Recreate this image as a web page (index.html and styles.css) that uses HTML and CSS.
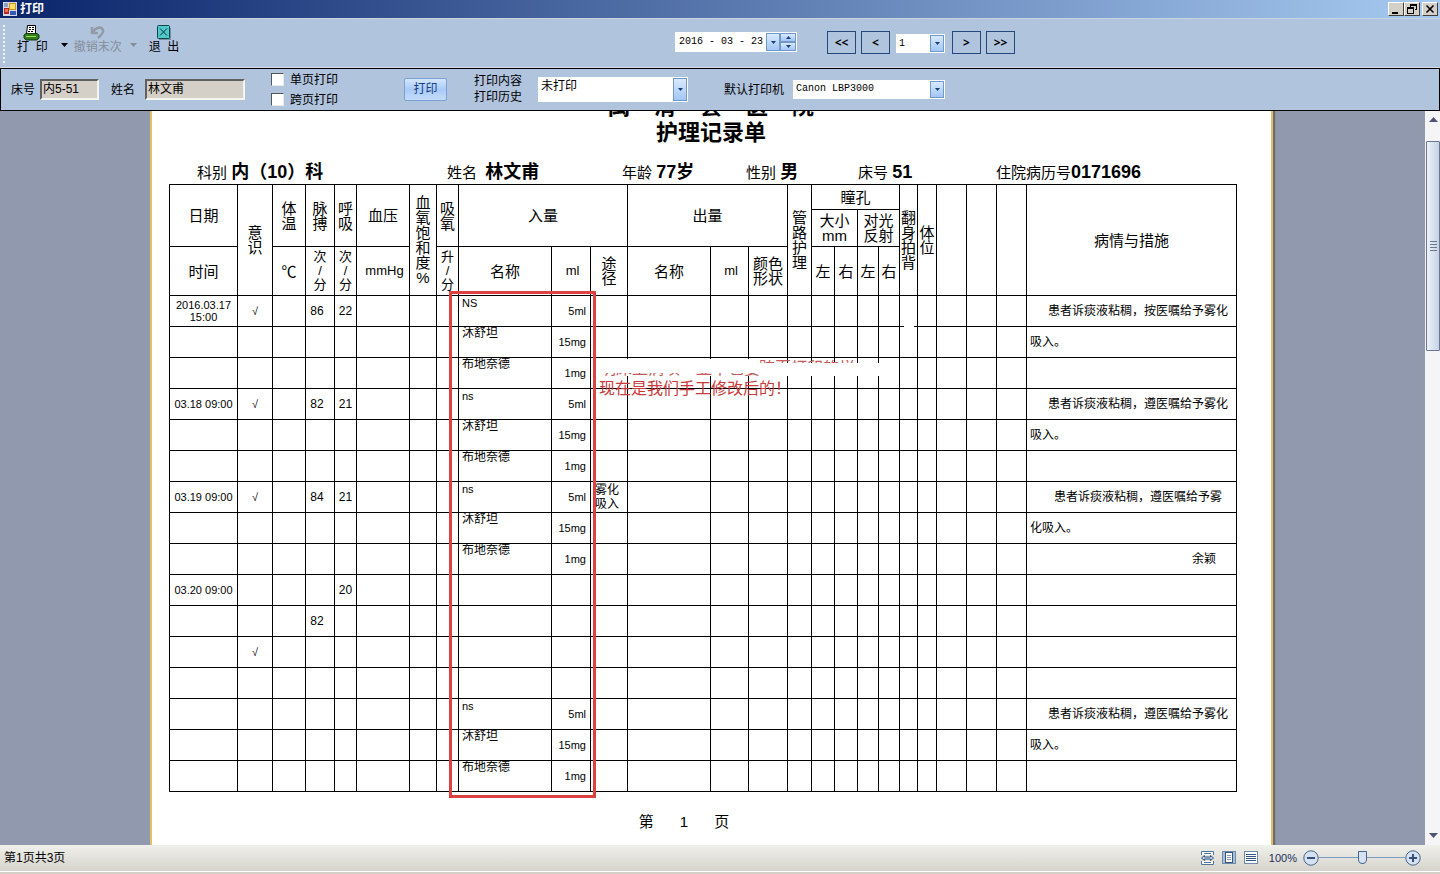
FILE: index.html
```html
<!DOCTYPE html>
<html lang="zh-CN">
<head>
<meta charset="utf-8">
<title>打印</title>
<link rel="stylesheet" href="styles.css">
</head>
<body>
<header class="titlebar">
  <svg class="app-icon" width="14" height="14" viewBox="0 0 14 14"><rect width="14" height="14" fill="#d8d8e4"/><rect x="1" y="1" width="4" height="4" fill="#8d9ed0"/><rect x="6" y="1" width="7" height="7" fill="#c89520"/><rect x="7" y="2" width="5" height="5" fill="#ffdf68"/><rect x="1" y="6" width="5" height="6" fill="#b5281c"/><rect x="2" y="7" width="3" height="3" fill="#ef7050"/><rect x="7" y="9" width="6" height="4" fill="#3558b8"/></svg>
  <h1 class="title">打印</h1>
  <div class="win-buttons">
    <button class="win" aria-label="最小化"><svg width="14" height="12"><path d="M3 9h6v2H3z"/></svg></button>
    <button class="win" aria-label="还原"><svg width="14" height="12"><path d="M5 1h7v6h-2V6h1V3H6v1H5zM2 4h7v7H2zM3 6v4h5V6z" fill-rule="evenodd"/></svg></button>
    <button class="win win-close" aria-label="关闭"><svg width="14" height="12"><path d="M3.500 2.500l7 7M10.500 2.500l-7 7" stroke="#000" stroke-width="1.600"/></svg></button>
  </div>
</header>

<div class="toolbar">
  <div class="tools">
    <span class="grip"></span>
    <button class="tool"><svg width="18" height="16" viewBox="0 0 18 16"><path d="M4.500 .5h8V9h-9z" fill="#fff" stroke="#000"/><path d="M6 2.500h2m1 0h2M6 4.500h2m1 0h2M5 6.500h2m1 0h2" stroke="#000"/><path d="M3 8.500h11l2 1.500v3l-2 2H3l-2-2v-3z" fill="#2f7d20" stroke="#123c0c"/><path d="M3 11.500h10" stroke="#a8d850"/></svg><span>打 &nbsp;印</span></button>
    <svg class="caret" width="7" height="4"><path d="M0 0h7L3.500 4z"/></svg>
    <button class="tool tool-undo" disabled><svg width="18" height="16" viewBox="0 0 18 16"><path d="M3 2v6h6M3.500 7.500C7 2 12 1 14 5c1 3-2 5-5 8" fill="none" stroke="#929aa6" stroke-width="2.500"/></svg><span>撤销末次</span></button>
    <svg class="caret caret-off" width="7" height="4"><path d="M0 0h7L3.500 4z"/></svg>
    <button class="tool"><svg width="18" height="16" viewBox="0 0 18 16"><path d="M4 3h12v12H4z" fill="#7d8ba0"/><rect x="2.500" y=".5" width="12" height="13" rx="1" fill="#52c8cb" stroke="#07484f"/><path d="M5 3.500l7 7M12 3.500l-7 7" stroke="#06343c"/></svg><span>退 &nbsp;出</span></button>
  </div>
  <div class="date">
    <input class="date-text" value="2016 - 03 - 23" aria-label="日期">
    <button class="drop" aria-label="选择日期"><svg width="5" height="3"><path d="M0 0h5L2.500 3z"/></svg></button>
    <span class="spin"><button aria-label="增加"><svg width="5" height="3"><path d="M0 3h5L2.500 0z"/></svg></button><button aria-label="减少"><svg width="5" height="3"><path d="M0 0h5L2.500 3z"/></svg></button></span>
  </div>
  <nav class="pager">
    <button class="page-btn">&lt;&lt;</button>
    <button class="page-btn">&lt;</button>
    <span class="combo combo-page"><select aria-label="页码"><option>1</option><option>2</option><option>3</option></select><span class="drop"><svg width="5" height="3"><path d="M0 0h5L2.500 3z"/></svg></span></span>
    <button class="page-btn">&gt;</button>
    <button class="page-btn">&gt;&gt;</button>
  </nav>
</div>

<form class="filters">
  <label class="field" for="bed">床号</label><input class="sunken bed" id="bed" value="内5-51" readonly>
  <label class="field name-label" for="name">姓名</label><input class="sunken name" id="name" value="林文甫" readonly>
  <div class="checks">
    <label><input type="checkbox">单页打印</label>
    <label><input type="checkbox">跨页打印</label>
  </div>
  <button class="print" type="button">打印</button>
  <label class="content-label" for="content">打印内容<br>打印历史</label>
  <span class="combo combo-content"><select id="content"><option>未打印</option></select><span class="drop"><svg width="5" height="3"><path d="M0 0h5L2.500 3z"/></svg></span></span>
  <label class="printer-label" for="printer">默认打印机</label>
  <span class="combo combo-printer"><select id="printer"><option>Canon LBP3000</option></select><span class="drop"><svg width="5" height="3"><path d="M0 0h5L2.500 3z"/></svg></span></span>
</form>

<main class="viewer">
  <div class="desk">
    <article class="paper">
      <h2 class="hospital"><span>闽</span><span>清</span><span>县</span><span>医</span><span>院</span></h2>
      <h2 class="doc-title">护理记录单</h2>
      <div class="patient">
        <span>科别 <b>内（10）科</b></span>
        <span>姓名 &nbsp;<b>林文甫</b></span>
        <span>年龄 <b>77岁</b></span>
        <span>性别 <b>男</b></span>
        <span>床号 <b>51</b></span>
        <span>住院病历号<b>0171696</b></span>
      </div>
      <div class="chart">
        <table>
          <colgroup><col class="c68"><col class="c35"><col class="c33"><col class="c29"><col class="c22"><col class="c53"><col class="c27"><col class="c22"><col class="c93"><col class="c39"><col class="c37"><col class="c83"><col class="c38"><col class="c39"><col class="c24"><col class="c23"><col class="c23"><col class="c21"><col class="c21"><col class="c18"><col class="c19"><col class="c30"><col class="c30"><col class="c30"><col></colgroup>
          <thead>
            <tr class="h1"><th rowspan="2">日期<th rowspan="3">意<br>识<th rowspan="2">体<br>温<th rowspan="2">脉<br>搏<th rowspan="2">呼<br>吸<th rowspan="2">血压<th rowspan="3">血<br>氧<br>饱<br>和<br>度<br>%<th rowspan="2">吸<br>氧<th colspan="3" rowspan="2">入量<th colspan="3" rowspan="2">出量<th rowspan="3">管<br>路<br>护<br>理<th colspan="4">瞳孔<th rowspan="3">翻<br>身<br>拍<br>背<th rowspan="3">体<br>位<th rowspan="3"><th rowspan="3"><th rowspan="3"><th rowspan="3">病情与措施</tr>
            <tr class="h2"><th colspan="2">大小<br>mm<th colspan="2">对光<br>反射</tr>
            <tr class="h3"><th>时间<th>℃<th class="per">次<br>/<br>分<th class="per">次<br>/<br>分<th class="unit">mmHg<th class="per">升<br>/<br>分<th>名称<th class="unit">ml<th>途<br>径<th>名称<th class="unit">ml<th>颜色<br>形状<th>左<th>右<th>左<th>右</tr>
          </thead>
          <tbody>
            <tr><td>2016.03.17<br>15:00<td>√<td><td class="pulse">86<td class="num">22<td><td><td><td class="drug latin">NS<td class="dose">5ml<td><td><td><td><td><td><td><td><td><td><td><td><td><td><td class="note">患者诉痰液粘稠，按医嘱给予雾化</tr>
            <tr><td><td><td><td><td><td><td><td><td class="drug">沐舒坦<td class="dose">15mg<td><td><td><td><td><td><td><td><td><td><td><td><td><td><td class="note-left">吸入。</tr>
            <tr><td><td><td><td><td><td><td><td><td class="drug">布地奈德<td class="dose">1mg<td><td><td><td><td><td><td><td><td><td><td><td><td><td><td></tr>
            <tr><td>03.18 09:00<td>√<td><td class="pulse">82<td class="num">21<td><td><td><td class="drug latin">ns<td class="dose">5ml<td><td><td><td><td><td><td><td><td><td><td><td><td><td><td class="note">患者诉痰液粘稠，遵医嘱给予雾化</tr>
            <tr><td><td><td><td><td><td><td><td><td class="drug">沐舒坦<td class="dose">15mg<td><td><td><td><td><td><td><td><td><td><td><td><td><td><td class="note-left">吸入。</tr>
            <tr><td><td><td><td><td><td><td><td><td class="drug">布地奈德<td class="dose">1mg<td><td><td><td><td><td><td><td><td><td><td><td><td><td><td></tr>
            <tr><td>03.19 09:00<td>√<td><td class="pulse">84<td class="num">21<td><td><td><td class="drug latin">ns<td class="dose">5ml<td class="route">雾化<br>吸入<td><td><td><td><td><td><td><td><td><td><td><td><td><td class="note">患者诉痰液粘稠，遵医嘱给予雾</tr>
            <tr><td><td><td><td><td><td><td><td><td class="drug">沐舒坦<td class="dose">15mg<td><td><td><td><td><td><td><td><td><td><td><td><td><td><td class="note-left">化吸入。</tr>
            <tr><td><td><td><td><td><td><td><td><td class="drug">布地奈德<td class="dose">1mg<td><td><td><td><td><td><td><td><td><td><td><td><td><td><td class="sign">余颖</tr>
            <tr><td>03.20 09:00<td><td><td><td class="num">20<td><td><td><td><td><td><td><td><td><td><td><td><td><td><td><td><td><td><td><td></tr>
            <tr><td><td><td><td class="pulse">82<td><td><td><td><td><td><td><td><td><td><td><td><td><td><td><td><td><td><td><td><td></tr>
            <tr><td><td>√<td><td><td><td><td><td><td><td><td><td><td><td><td><td><td><td><td><td><td><td><td><td><td></tr>
            <tr><td><td><td><td><td><td><td><td><td><td><td><td><td><td><td><td><td><td><td><td><td><td><td><td><td></tr>
            <tr><td><td><td><td><td><td><td><td><td class="drug latin">ns<td class="dose">5ml<td><td><td><td><td><td><td><td><td><td><td><td><td><td><td class="note">患者诉痰液粘稠，遵医嘱给予雾化</tr>
            <tr><td><td><td><td><td><td><td><td><td class="drug">沐舒坦<td class="dose">15mg<td><td><td><td><td><td><td><td><td><td><td><td><td><td><td class="note-left">吸入。</tr>
            <tr><td><td><td><td><td><td><td><td><td class="drug">布地奈德<td class="dose">1mg<td><td><td><td><td><td><td><td><td><td><td><td><td><td><td></tr>
          </tbody>
        </table>
        <div class="erased erased-left"></div>
        <div class="erased erased-right"></div>
        <div class="erased erased-gap"></div>
        <div class="remnant remnant-low" aria-hidden="true"><span>明床上病项一显中也要</span></div>
        <div class="remnant remnant-high" aria-hidden="true"><span>跨页打印的样</span></div>
        <p class="remark">现在是我们手工修改后的！</p>
        <div class="mark"></div>
      </div>
      <footer class="folio"><span>第</span><span>1</span><span>页</span></footer>
    </article>
  </div>
  <div class="scrollbar">
    <svg width="9" height="5"><path d="M0 5h9L4.500 0z" fill="#4d5478"/></svg>
    <div class="thumb"><i></i><i></i><i></i><i></i></div>
    <svg class="down" width="9" height="5"><path d="M0 0h9L4.500 5z" fill="#4d5478"/></svg>
  </div>
</main>

<footer class="status">
  <span>第1页共3页</span>
  <div class="zoom">
    <button aria-label="页宽"><svg width="15" height="14" viewBox="0 0 15 14"><path d="M1.500 4V.5h12V4M1.500 10v3.500h12V10" fill="#fff" stroke="#53749a"/><path d="M4 2.500h7M4 11.500h7" stroke="#53749a"/><path d="M1.500 7l3-2.500v1.500h6V4.500l3 2.500-3 2.500V8h-6v1.500z" fill="#c6d9ee" stroke="#34557d"/></svg></button>
    <button aria-label="整页"><svg width="15" height="14" viewBox="0 0 15 14"><rect x=".5" y=".5" width="13" height="12" fill="#a9bfd8" stroke="#6e8bad"/><rect x="3.500" y="1.500" width="7" height="10" fill="#fff" stroke="#34557d"/><path d="M5 4.500h4M5 6.500h4M5 8.500h4" stroke="#7c9cc4"/></svg></button>
    <button aria-label="连续"><svg width="15" height="14" viewBox="0 0 15 14"><rect x=".5" y=".5" width="13" height="12" fill="#fff" stroke="#6e8bad"/><path d="M2 3.500h10M2 5.500h10M2 7.500h10M2 9.500h10" stroke="#34557d"/></svg></button>
    <label for="scale">100%</label>
    <button aria-label="缩小"><svg width="16" height="16"><circle cx="8" cy="8" r="7.200" fill="#d5e2f2" stroke="#49658c"/><path d="M4 8h8" stroke="#34507c" stroke-width="2"/></svg></button>
    <input id="scale" type="range" min="0" max="200" value="100">
    <button aria-label="放大"><svg width="16" height="16"><circle cx="8" cy="8" r="7.200" fill="#d5e2f2" stroke="#49658c"/><path d="M4 8h8M8 4v8" stroke="#34507c" stroke-width="2"/></svg></button>
  </div>
</footer>
</body>
</html>
```
FILE: styles.css
```css
* { box-sizing: border-box; }
body {
  margin: 0;
  height: 100vh;
  display: flex;
  flex-direction: column;
  overflow: hidden;
  font: 12px/16px "Liberation Sans", "Noto Sans CJK SC", sans-serif;
  color: #000;
  background: #b0c4de;
}
button, input, select { font: inherit; color: inherit; margin: 0; padding: 0; border-radius: 0; }
button { border: 0; background: none; }
svg { display: block; }

.titlebar {
  flex: none;
  height: 18px;
  display: flex;
  align-items: center;
  padding: 0 2px 0 3px;
  background: linear-gradient(90deg, #0a246a, #a6caf0);
}
.title { margin: 0 0 0 3px; font-size: 12px; line-height: 16px; color: #fff; }
.win-buttons { margin-left: auto; display: flex; }
.win {
  width: 16px;
  height: 14px;
  background: #d4d0c8;
  border: 1px solid;
  border-color: #fff #404040 #404040 #fff;
}
.win-close { margin-left: 2px; }

.toolbar {
  flex: none;
  height: 50px;
  display: flex;
  align-items: flex-start;
  border-top: 1px solid #c6d6dc;
  border-bottom: 1px solid #d4dce6;
}
.tools { width: 675px; display: flex; align-items: flex-start; padding: 6px 0 0 3px; }
.grip { width: 2px; height: 38px; background: repeating-linear-gradient(#eef3fa 0 2px, transparent 2px 4px); }
.tool { margin-left: 12px; display: flex; flex-direction: column; align-items: center; line-height: 14px; font-size: 12px; white-space: nowrap; }
.tool svg { margin-bottom: -1px; }
.tool-undo { margin-left: 6px; color: #858d99; }
.caret { margin: 18px 0 0 13px; }
.caret-off { margin-left: 8px; fill: #858d99; }
.date {
  width: 122px;
  height: 20px;
  margin-top: 13px;
  padding: 1px;
  display: flex;
  background: #fff;
}
.date-text, .combo-page, .combo-printer { font-family: "Liberation Mono", monospace; font-size: 10px; }
.date-text { flex: 1; min-width: 0; padding-left: 3px; border: 0; background: none; }
.drop, .spin button {
  display: flex;
  align-items: center;
  justify-content: center;
  border: 1px solid #7398cc;
  background: linear-gradient(#d9e9fd, #a3c6f5);
  fill: #173f7d;
}
.drop { width: 14px; height: 18px; }
.spin { width: 16px; display: grid; }
.pager { display: flex; align-items: center; gap: 5px; margin: 12px 0 0 30px; }
.page-btn {
  width: 29px;
  height: 23px;
  border: 1px solid #24487c;
  font: bold 12px/18px "Noto Sans", sans-serif;
}
.combo { position: relative; display: flex; background: #fff; }
.combo select { width: 100%; border: 0; padding: 0 18px 0 3px; background: none; appearance: none; }
.combo .drop { position: absolute; right: 1px; top: 1px; bottom: 1px; height: auto; pointer-events: none; }
.combo-page { width: 49px; height: 19px; margin: 2px 2px 0 1px; }

.filters {
  flex: none;
  height: 43px;
  display: flex;
  align-items: center;
  padding-left: 10px;
  border: 1px solid #000;
}
.sunken {
  height: 21px;
  padding: 0 0 4px 1px;
  border: 2px solid;
  border-color: #606060 #f4f4f0 #f4f4f0 #606060;
  background: #d4d0c8;
}
.bed { width: 59px; margin-left: 5px; }
.name-label { margin-left: 12px; }
.name { width: 100px; margin-left: 10px; }
.checks { width: 107px; margin-left: 26px; display: grid; gap: 4px; }
.checks label { display: flex; align-items: center; gap: 6px; }
.checks input {
  appearance: none;
  width: 13px;
  height: 13px;
  border: 1px solid;
  border-color: #555 #e8e8e8 #e8e8e8 #555;
  background: #fff;
}
.print {
  width: 43px;
  height: 23px;
  margin-left: 26px;
  padding-bottom: 2px;
  border: 1px solid #7ba1d4;
  border-radius: 2px;
  background: linear-gradient(#d5e6fc, #a9cbf8 50%, #c4dcfb);
  color: #173f7d;
}
.content-label { margin-left: 27px; padding-bottom: 2px; }
.combo-content { width: 150px; height: 25px; margin-left: 16px; }
.combo-content select { padding-bottom: 8px; }
.printer-label { margin-left: 36px; }
.combo-printer { width: 152px; height: 19px; margin-left: 9px; }
.combo-printer select { padding-bottom: 2px; }

.viewer { flex: 1; min-height: 0; display: flex; background: #9099ae; }
.desk { flex: 1; min-width: 0; padding-right: 2px; overflow: hidden; }
.paper {
  display: flow-root;
  max-width: 1123px;
  min-height: 100%;
  margin: 0 auto;
  padding: 0 34px 0 17px;
  background: #fff;
  border: solid #e5be6c;
  border-width: 0 2px;
  box-shadow: 2px 0 1px #6d6d68;
}
.hospital, .doc-title { margin: 0; text-align: center; font-size: 22px; line-height: 24px; }
.hospital { display: flex; justify-content: center; gap: 24px; margin-top: -16px; padding-left: 16px; }
.doc-title { margin-top: 2px; padding-left: 16px; }
.patient {
  display: grid;
  grid-template-columns: 250px 175px 124px 112px 138px auto;
  align-items: baseline;
  margin: 17px 0 1px;
  padding-left: 28px;
  font-size: 15px;
  line-height: 20px;
  white-space: nowrap;
}
.patient b { font-size: 18px; }
.chart { position: relative; }
table { width: 100%; table-layout: fixed; border-collapse: collapse; }
th, td { border: 1px solid #000; padding: 0; text-align: center; }
th { font-size: 15px; line-height: 15px; font-weight: 400; }
td { height: 31px; font-size: 11px; line-height: 12px; white-space: nowrap; }
.h1 { height: 25px; }
.h2 { height: 37px; }
.h3 { height: 49px; }
.unit, .per { font-size: 13px; line-height: 14px; }
.unit { padding-left: 3px; }
.c18 { width: 18px; } .c19 { width: 19px; } .c21 { width: 21px; } .c22 { width: 22px; }
.c23 { width: 23px; } .c24 { width: 24px; } .c27 { width: 27px; } .c29 { width: 29px; }
.c30 { width: 30px; } .c33 { width: 33px; } .c35 { width: 35px; } .c37 { width: 37px; }
.c38 { width: 38px; } .c39 { width: 39px; } .c53 { width: 53px; } .c68 { width: 68px; }
.c83 { width: 83px; } .c93 { width: 93px; }
.num, .pulse, .note, .note-left, .sign, .route { font-size: 12px; }
.pulse { padding-right: 6px; }
.drug { padding: 0 0 0 3px; text-align: left; vertical-align: top; font-size: 12px; }
.latin { padding-top: 1px; font-size: 11px; }
.dose { padding-right: 4px; text-align: right; }
.route { padding-left: 4px; text-align: left; line-height: 14px; }
.note { padding-left: 13px; }
.note-left { padding-left: 3px; text-align: left; }
.sign { padding-right: 20px; text-align: right; }

.erased, .remnant, .remark, .mark { position: absolute; }
.erased { background: #fff; }
.erased-left { left: 427px; top: 175px; width: 165px; height: 17px; }
.erased-right { left: 590px; top: 179px; width: 120px; height: 13px; }
.erased-gap { left: 735px; top: 139px; width: 10px; height: 8px; }
.remnant { height: 3px; overflow: hidden; font-size: 16px; color: #c25a5a; white-space: nowrap; }
.remnant span { display: block; line-height: 16px; }
.remnant-low { left: 431px; top: 189px; }
.remnant-low span { margin-top: -12px; }
.remnant-high { left: 590px; top: 176px; }
.remark { left: 430px; top: 196px; margin: 0; font-size: 16px; line-height: 18px; color: #c93c3c; }
.mark { left: 280px; top: 107px; width: 147px; height: 507px; border: 3px solid #dc4340; }
.folio { display: flex; justify-content: center; gap: 26px; margin-top: 20px; padding-right: 38px; font-size: 15px; line-height: 20px; }

.scrollbar { width: 15px; padding: 6px 0 7px 1px; display: flex; flex-direction: column; align-items: center; background: #f5f5f8; }
.thumb {
  width: 100%;
  height: 210px;
  margin-top: 19px;
  display: flex;
  flex-direction: column;
  align-items: center;
  justify-content: center;
  gap: 2px;
  border: 1px solid #6b7594;
  border-radius: 1px;
  background: linear-gradient(90deg, #eef2f8, #c5d2e4);
}
.thumb i { width: 7px; height: 1px; background: #6b7594; }
.down { margin-top: auto; }

.status {
  flex: none;
  height: 29px;
  display: flex;
  align-items: center;
  justify-content: space-between;
  padding: 0 19px 4px 4px;
  background: linear-gradient(#f0f0ec, #d5d3cb 26px, #fff 26px, #fff 27px, #d4d0c8 27px);
}
.zoom { display: flex; align-items: center; color: #1c2f5c; }
.zoom button { margin-right: 7px; }
.zoom label { margin: 0 6px 0 3px; font-size: 11px; }
.zoom label ~ button { margin-right: 0; }
.zoom input { width: 86px; height: 14px; appearance: none; background: linear-gradient(#7e9bc0, #7e9bc0) center / 100% 1px no-repeat; }
.zoom input::-webkit-slider-thumb {
  appearance: none;
  width: 9px;
  height: 13px;
  border: 1px solid #49658c;
  border-radius: 1px 1px 5px 5px;
  background: #d5e2f2;
}
```
